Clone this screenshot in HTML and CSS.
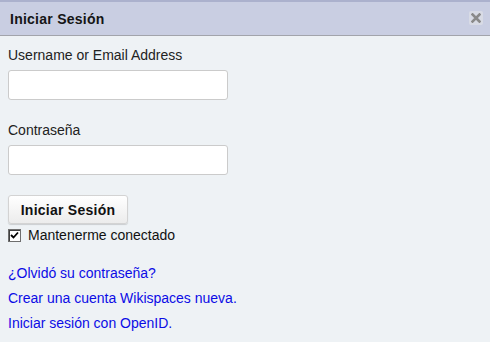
FILE: index.html
```html
<!DOCTYPE html>
<html>
<head>
  <title>Iniciar Sesión</title>
  <meta name="viewport" content="width=device-width, initial-scale=1.0">
  <link rel="stylesheet" href="styles.css">
</head>
<body>
  <div class="dialog">
    <div class="dialog-header">
      <span class="dialog-title">Iniciar Sesión</span>
      <span class="close-btn" title="Cerrar">
        <svg width="10" height="10" viewBox="0 0 10 10">
          <path d="M1.5 1.5 L8.5 8.5 M8.5 1.5 L1.5 8.5" stroke="#8a8a8a" stroke-width="2.6" stroke-linecap="square"/>
        </svg>
      </span>
    </div>
    <form class="dialog-body">
      <label class="field-label" for="username">Username or Email Address</label>
      <input class="text-input" id="username" type="text">
      <label class="field-label second" for="password">Contraseña</label>
      <input class="text-input" id="password" type="password">
      <button class="login-btn" type="button">Iniciar Sesión</button>
      <label class="remember">
        <span class="check-box">
          <svg width="9" height="9" viewBox="0 0 9 9">
            <path d="M1 4 L3.5 6.5 L8 1.5" fill="none" stroke="#000000" stroke-width="1.8"/>
          </svg>
        </span>
        <span>Mantenerme conectado</span>
      </label>
      <div class="links">
        <a href="#">¿Olvidó su contraseña?</a>
        <a href="#">Crear una cuenta Wikispaces nueva.</a>
        <a href="#">Iniciar sesión con OpenID.</a>
      </div>
    </form>
  </div>
</body>
</html>
```

FILE: styles.css
```css
html, body {
  margin: 0;
  padding: 0;
  height: 100%;
}

body {
  font-family: "Liberation Sans", Arial, sans-serif;
  font-size: 14px;
  line-height: 16px;
  color: #222222;
  background-color: #eef2f5;
}

.dialog {
  min-height: 100%;
  background-color: #eef2f5;
}

.dialog-header {
  display: flex;
  align-items: center;
  justify-content: space-between;
  height: 33px;
  padding: 0 7px 0 10px;
  background-color: #c9cee2;
  border-top: 2px solid #abb1cd;
  border-bottom: 1px solid #a2a4ab;
}

.dialog-title {
  font-weight: bold;
  letter-spacing: 0.25px;
  color: #151515;
  margin-top: 1px;
}

.close-btn {
  display: flex;
  align-items: center;
  justify-content: center;
  width: 14px;
  height: 14px;
  border-radius: 2px;
  background-color: #d8dbe5;
  margin-top: -2px;
  cursor: pointer;
}

.dialog-body {
  display: flex;
  flex-direction: column;
  align-items: flex-start;
  padding: 11px 8px 0 8px;
  margin: 0;
}

.field-label {
  display: block;
}

.field-label.second {
  margin-top: 22px;
}

.text-input {
  box-sizing: border-box;
  width: 220px;
  height: 30px;
  margin: 7px 0 0 0;
  border: 1px solid #cbcbcb;
  border-radius: 3px;
  background-color: #ffffff;
  font-family: inherit;
  font-size: 14px;
}

.login-btn {
  box-sizing: border-box;
  width: 120px;
  height: 29px;
  margin-top: 20px;
  padding: 0;
  font-family: inherit;
  font-size: 14px;
  font-weight: bold;
  letter-spacing: 0.25px;
  color: #111111;
  background: linear-gradient(#ffffff, #ececec);
  border: 1px solid #d3d3d3;
  border-radius: 3px;
  box-shadow: 0 1px 1px rgba(0, 0, 0, 0.15);
  cursor: pointer;
}

.remember {
  display: flex;
  align-items: center;
  margin-top: 3px;
  height: 16px;
  color: #111111;
}

.check-box {
  box-sizing: border-box;
  display: flex;
  align-items: center;
  justify-content: center;
  width: 13px;
  height: 13px;
  margin: 1px 7px 0 0;
  background-color: #ffffff;
  border: 1px solid #6e6e6e;
  box-shadow: inset 1px 1px 0 #404040;
}

.links {
  display: flex;
  flex-direction: column;
  gap: 9px;
  margin-top: 22px;
}

.links a {
  color: #0c0ce6;
  text-decoration: none;
}

.links a:hover {
  text-decoration: underline;
}
```
